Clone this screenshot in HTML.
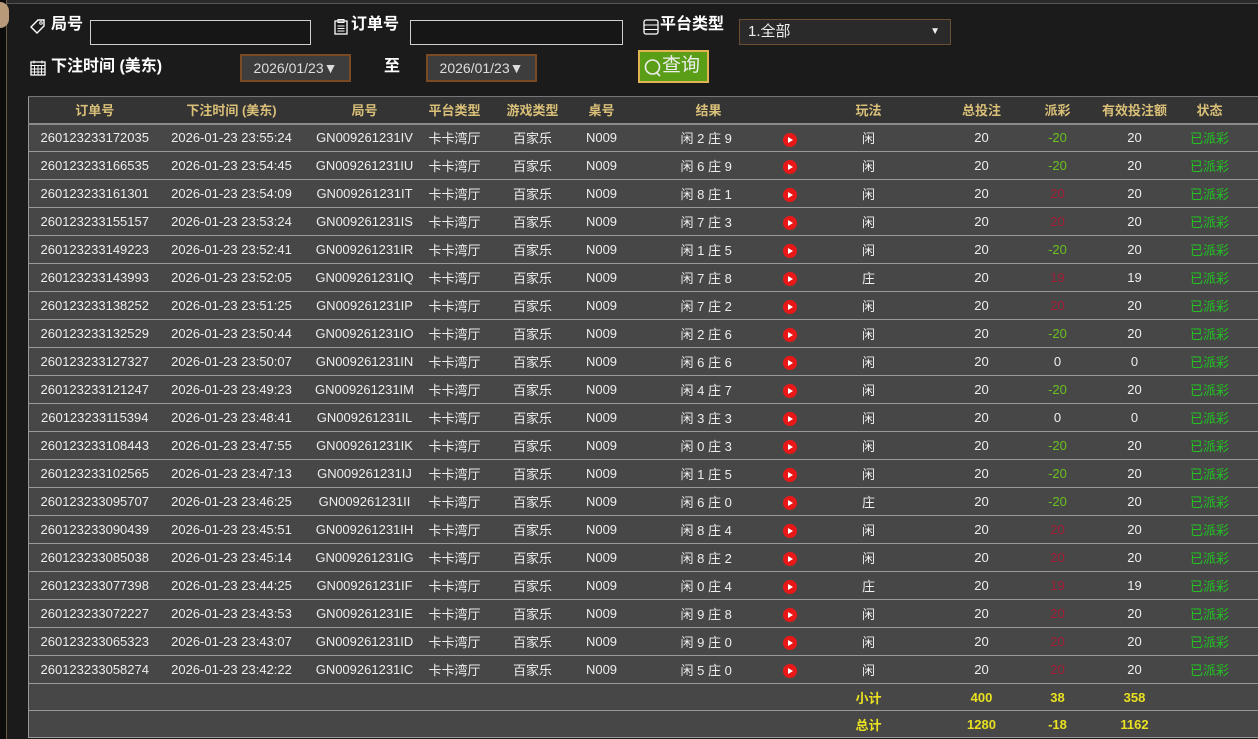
<!DOCTYPE html>
<html><head><meta charset="utf-8"><style>
*{margin:0;padding:0;box-sizing:border-box}
body{width:1258px;height:739px;overflow:hidden;background:#1b1b1b;font-family:"Liberation Sans","Noto Sans CJK SC",sans-serif;color:#fff;position:relative}
.topline{position:absolute;left:0;top:0;width:1258px;height:4px;background:#2a2a2a;border-bottom:1px solid #555}
.lstrip{position:absolute;left:0;top:0;width:7px;height:739px;background:#0c0c0c;border-right:1px solid #6b5a3e}
.lblob{position:absolute;left:0;top:2px;width:9px;height:26px;background:#b89a78;border-radius:0 12px 12px 0}
.lbl{position:absolute;font-weight:bold;font-size:16px;color:#fff;line-height:20px}
.inp{position:absolute;height:25px;border:1px solid #cfcfcf;background:#161616}
.ic{position:absolute}
.date{position:absolute;height:28px;width:111px;background:#3d3d3d;border:2px solid #7a4a22;color:#ddd;font-size:14px;line-height:24px;text-align:center}
.sel{position:absolute;left:739px;top:19px;width:212px;height:26px;background:#2a2a2a;border:1px solid #6b4f32;font-size:15px;line-height:24px;padding-left:8px;color:#eee}
.btn{position:absolute;left:638px;top:50px;width:71px;height:33px;background:#5a9e18;border:2px solid #e0b450;font-size:19px;line-height:28px;color:#eee;padding-left:22px}
table{position:absolute;left:28px;top:96px;border-collapse:collapse;table-layout:fixed;width:1230px;font-size:13px}
th{background:#343434;color:#d9bf78;height:27px;font-weight:bold;border-bottom:2px solid #8a8a8a;padding:0}
td{background:#474747;height:28px;text-align:center;border-bottom:1px solid #9a9a9a;color:#eee;white-space:nowrap;position:relative;padding:0}
table{border-top:1px solid #777;border-left:1px solid #999}
td:last-child,th:last-child{padding-right:20px}
.g{color:#68c21e}.r{color:#a01c34}.s{color:#22c322}
.p{position:absolute;left:162px;top:8px;width:14px;height:14px;border-radius:50%;background:#e81818;z-index:2;display:block}
.p:after{content:"";position:absolute;left:5px;top:4px;border-left:5px solid #fff;border-top:3px solid transparent;border-bottom:3px solid transparent}
.y td{color:#e8e020;font-weight:bold;border-bottom:1px solid #9a9a9a;height:27px}
.rs{text-align:left!important;padding-left:60px!important}
</style></head><body>
<div class="topline"></div>
<div class="lstrip"></div><div class="lblob"></div>
<svg class="ic" style="left:29px;top:17px" width="18" height="18" viewBox="0 0 18 18"><path d="M2 10 L9 3 L15 3 L15 9 L8 16 Z" fill="none" stroke="#fff" stroke-width="1.4"/><circle cx="12" cy="6" r="1.3" fill="none" stroke="#fff"/></svg>
<div class="lbl" style="left:51px;top:15px">局号</div>
<div class="inp" style="left:90px;top:20px;width:221px"></div>
<svg class="ic" style="left:332px;top:18px" width="18" height="18" viewBox="0 0 18 18"><rect x="3" y="3" width="12" height="13" fill="none" stroke="#fff" stroke-width="1.3"/><rect x="6" y="1.5" width="6" height="3" fill="none" stroke="#fff"/><path d="M5.5 8h7M5.5 10.5h7M5.5 13h7" stroke="#fff"/></svg>
<div class="lbl" style="left:351px;top:15px">订单号</div>
<div class="inp" style="left:410px;top:20px;width:213px"></div>
<svg class="ic" style="left:642px;top:18px" width="18" height="18" viewBox="0 0 18 18"><rect x="2" y="2" width="14" height="14" rx="2" fill="none" stroke="#fff" stroke-width="1.3"/><path d="M2 7h14M2 11.5h14" stroke="#fff"/></svg>
<div class="lbl" style="left:660px;top:15px">平台类型</div>
<div class="sel">1.全部<span style="position:absolute;right:10px;top:0;font-size:10px">▼</span></div>
<svg class="ic" style="left:29px;top:59px" width="18" height="18" viewBox="0 0 18 18"><rect x="2" y="3" width="14" height="13" fill="none" stroke="#fff" stroke-width="1.3"/><path d="M2 6.5h14M5.5 6.5v9.5M9 6.5v9.5M12.5 6.5v9.5M2 10h14M2 13h14M5 1.5v3M13 1.5v3" stroke="#fff" stroke-width=".9"/></svg>
<div class="lbl" style="left:51px;top:57px">下注时间 (美东)</div>
<div class="date" style="left:240px;top:54px">2026/01/23▼</div>
<div class="lbl" style="left:384px;top:57px">至</div>
<div class="date" style="left:426px;top:54px">2026/01/23▼</div>
<div class="btn"><svg style="position:absolute;left:4px;top:6px" width="18" height="20" viewBox="0 0 18 20"><circle cx="8.5" cy="9" r="7" fill="none" stroke="#eee" stroke-width="1.6"/><path d="M12 14l4 4" stroke="#eee" stroke-width="1.6"/></svg>查询</div>
<table>
<colgroup><col style="width:132px"><col style="width:142px"><col style="width:124px"><col style="width:56px"><col style="width:100px"><col style="width:38px"><col style="width:180px"><col style="width:136px"><col style="width:90px"><col style="width:62px"><col style="width:92px"><col style="width:78px"></colgroup>
<tr><th>订单号</th><th>下注时间 (美东)</th><th>局号</th><th>平台类型</th><th>游戏类型</th><th>桌号</th><th style="text-align:left;padding-left:75px">结果</th><th>玩法</th><th>总投注</th><th>派彩</th><th>有效投注额</th><th>状态</th></tr>
<tr><td>260123233172035</td><td>2026-01-23 23:55:24</td><td>GN009261231IV</td><td>卡卡湾厅</td><td>百家乐</td><td>N009</td><td class="rs">闲 2 庄 9<i class="p"></i></td><td>闲</td><td>20</td><td class="g">-20</td><td>20</td><td class="s">已派彩</td></tr>
<tr><td>260123233166535</td><td>2026-01-23 23:54:45</td><td>GN009261231IU</td><td>卡卡湾厅</td><td>百家乐</td><td>N009</td><td class="rs">闲 6 庄 9<i class="p"></i></td><td>闲</td><td>20</td><td class="g">-20</td><td>20</td><td class="s">已派彩</td></tr>
<tr><td>260123233161301</td><td>2026-01-23 23:54:09</td><td>GN009261231IT</td><td>卡卡湾厅</td><td>百家乐</td><td>N009</td><td class="rs">闲 8 庄 1<i class="p"></i></td><td>闲</td><td>20</td><td class="r">20</td><td>20</td><td class="s">已派彩</td></tr>
<tr><td>260123233155157</td><td>2026-01-23 23:53:24</td><td>GN009261231IS</td><td>卡卡湾厅</td><td>百家乐</td><td>N009</td><td class="rs">闲 7 庄 3<i class="p"></i></td><td>闲</td><td>20</td><td class="r">20</td><td>20</td><td class="s">已派彩</td></tr>
<tr><td>260123233149223</td><td>2026-01-23 23:52:41</td><td>GN009261231IR</td><td>卡卡湾厅</td><td>百家乐</td><td>N009</td><td class="rs">闲 1 庄 5<i class="p"></i></td><td>闲</td><td>20</td><td class="g">-20</td><td>20</td><td class="s">已派彩</td></tr>
<tr><td>260123233143993</td><td>2026-01-23 23:52:05</td><td>GN009261231IQ</td><td>卡卡湾厅</td><td>百家乐</td><td>N009</td><td class="rs">闲 7 庄 8<i class="p"></i></td><td>庄</td><td>20</td><td class="r">19</td><td>19</td><td class="s">已派彩</td></tr>
<tr><td>260123233138252</td><td>2026-01-23 23:51:25</td><td>GN009261231IP</td><td>卡卡湾厅</td><td>百家乐</td><td>N009</td><td class="rs">闲 7 庄 2<i class="p"></i></td><td>闲</td><td>20</td><td class="r">20</td><td>20</td><td class="s">已派彩</td></tr>
<tr><td>260123233132529</td><td>2026-01-23 23:50:44</td><td>GN009261231IO</td><td>卡卡湾厅</td><td>百家乐</td><td>N009</td><td class="rs">闲 2 庄 6<i class="p"></i></td><td>闲</td><td>20</td><td class="g">-20</td><td>20</td><td class="s">已派彩</td></tr>
<tr><td>260123233127327</td><td>2026-01-23 23:50:07</td><td>GN009261231IN</td><td>卡卡湾厅</td><td>百家乐</td><td>N009</td><td class="rs">闲 6 庄 6<i class="p"></i></td><td>闲</td><td>20</td><td>0</td><td>0</td><td class="s">已派彩</td></tr>
<tr><td>260123233121247</td><td>2026-01-23 23:49:23</td><td>GN009261231IM</td><td>卡卡湾厅</td><td>百家乐</td><td>N009</td><td class="rs">闲 4 庄 7<i class="p"></i></td><td>闲</td><td>20</td><td class="g">-20</td><td>20</td><td class="s">已派彩</td></tr>
<tr><td>260123233115394</td><td>2026-01-23 23:48:41</td><td>GN009261231IL</td><td>卡卡湾厅</td><td>百家乐</td><td>N009</td><td class="rs">闲 3 庄 3<i class="p"></i></td><td>闲</td><td>20</td><td>0</td><td>0</td><td class="s">已派彩</td></tr>
<tr><td>260123233108443</td><td>2026-01-23 23:47:55</td><td>GN009261231IK</td><td>卡卡湾厅</td><td>百家乐</td><td>N009</td><td class="rs">闲 0 庄 3<i class="p"></i></td><td>闲</td><td>20</td><td class="g">-20</td><td>20</td><td class="s">已派彩</td></tr>
<tr><td>260123233102565</td><td>2026-01-23 23:47:13</td><td>GN009261231IJ</td><td>卡卡湾厅</td><td>百家乐</td><td>N009</td><td class="rs">闲 1 庄 5<i class="p"></i></td><td>闲</td><td>20</td><td class="g">-20</td><td>20</td><td class="s">已派彩</td></tr>
<tr><td>260123233095707</td><td>2026-01-23 23:46:25</td><td>GN009261231II</td><td>卡卡湾厅</td><td>百家乐</td><td>N009</td><td class="rs">闲 6 庄 0<i class="p"></i></td><td>庄</td><td>20</td><td class="g">-20</td><td>20</td><td class="s">已派彩</td></tr>
<tr><td>260123233090439</td><td>2026-01-23 23:45:51</td><td>GN009261231IH</td><td>卡卡湾厅</td><td>百家乐</td><td>N009</td><td class="rs">闲 8 庄 4<i class="p"></i></td><td>闲</td><td>20</td><td class="r">20</td><td>20</td><td class="s">已派彩</td></tr>
<tr><td>260123233085038</td><td>2026-01-23 23:45:14</td><td>GN009261231IG</td><td>卡卡湾厅</td><td>百家乐</td><td>N009</td><td class="rs">闲 8 庄 2<i class="p"></i></td><td>闲</td><td>20</td><td class="r">20</td><td>20</td><td class="s">已派彩</td></tr>
<tr><td>260123233077398</td><td>2026-01-23 23:44:25</td><td>GN009261231IF</td><td>卡卡湾厅</td><td>百家乐</td><td>N009</td><td class="rs">闲 0 庄 4<i class="p"></i></td><td>庄</td><td>20</td><td class="r">19</td><td>19</td><td class="s">已派彩</td></tr>
<tr><td>260123233072227</td><td>2026-01-23 23:43:53</td><td>GN009261231IE</td><td>卡卡湾厅</td><td>百家乐</td><td>N009</td><td class="rs">闲 9 庄 8<i class="p"></i></td><td>闲</td><td>20</td><td class="r">20</td><td>20</td><td class="s">已派彩</td></tr>
<tr><td>260123233065323</td><td>2026-01-23 23:43:07</td><td>GN009261231ID</td><td>卡卡湾厅</td><td>百家乐</td><td>N009</td><td class="rs">闲 9 庄 0<i class="p"></i></td><td>闲</td><td>20</td><td class="r">20</td><td>20</td><td class="s">已派彩</td></tr>
<tr><td>260123233058274</td><td>2026-01-23 23:42:22</td><td>GN009261231IC</td><td>卡卡湾厅</td><td>百家乐</td><td>N009</td><td class="rs">闲 5 庄 0<i class="p"></i></td><td>闲</td><td>20</td><td class="r">20</td><td>20</td><td class="s">已派彩</td></tr>
<tr class="y"><td></td><td></td><td></td><td></td><td></td><td></td><td></td><td>小计</td><td>400</td><td>38</td><td>358</td><td></td></tr>
<tr class="y"><td></td><td></td><td></td><td></td><td></td><td></td><td></td><td>总计</td><td>1280</td><td>-18</td><td>1162</td><td></td></tr>
</table>
</body></html>
